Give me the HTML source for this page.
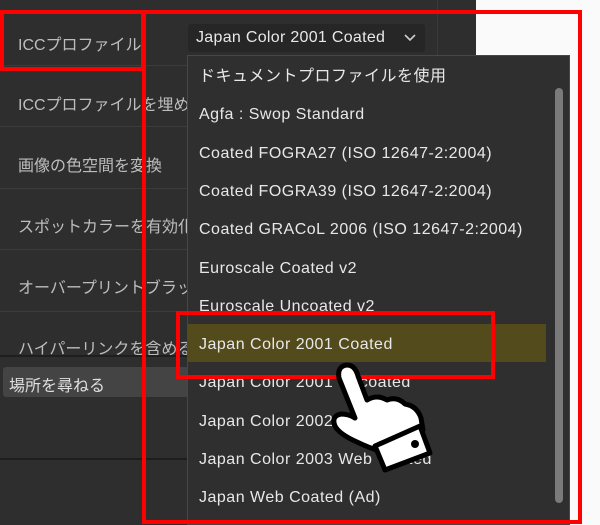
<!DOCTYPE html>
<html><head><meta charset="utf-8"><style>
*{margin:0;padding:0;box-sizing:border-box}
body{width:600px;height:525px;overflow:hidden;background:#fafafa;position:relative;font-family:"Liberation Sans","Noto Sans CJK JP",sans-serif}
.panel{position:absolute;left:0;top:0;width:476px;height:525px;background:#2e2e2e}
.lbl{position:absolute;left:18px;color:#bdbdbd;font-size:16px;white-space:nowrap}
.sep{position:absolute;left:0;height:1px;background:#3c3c3c}
.dd{position:absolute;left:187px;top:55px;width:383px;height:470px;background:#2f2f2f;border:1px solid #474747}
.it{position:absolute;left:11px;color:#e8e8e8;font-size:16px;white-space:nowrap;line-height:20px;letter-spacing:0.5px}
.r{position:absolute;border:4px solid #f00}
</style></head><body>
<div class="panel"></div>
<div style="position:absolute;left:437px;top:0;width:1px;height:55px;background:#3a3a3a"></div>
<div class="lbl" style="top:31px">ICCプロファイル</div>
<div class="sep" style="top:65px;width:187px"></div>
<div class="lbl" style="top:91px">ICCプロファイルを埋め込</div>
<div class="sep" style="top:126px;width:187px"></div>
<div class="lbl" style="top:152px">画像の色空間を変換</div>
<div class="sep" style="top:188px;width:187px"></div>
<div class="lbl" style="top:213px">スポットカラーを有効化</div>
<div class="sep" style="top:249px;width:187px"></div>
<div class="lbl" style="top:274px">オーバープリントブラック</div>
<div class="sep" style="top:311px;width:187px"></div>
<div class="lbl" style="top:335px">ハイパーリンクを含める</div>
<div class="sep" style="top:355px;width:187px;background:#1e1e1e;height:2px"></div>
<div style="position:absolute;left:3px;top:367px;width:186px;height:30px;background:#444;border-radius:3px;color:#e0e0e0;font-size:16px;padding:5px 0 0 6px">場所を尋ねる</div>
<div class="sep" style="top:458px;width:187px;background:#1e1e1e;height:2px"></div>
<div style="position:absolute;left:188px;top:24px;width:237px;height:28px;background:#262626;border-radius:3px;color:#e8e8e8;font-size:16px;padding:5px 0 0 8px;letter-spacing:0.3px">Japan Color 2001 Coated
<svg style="position:absolute;right:9px;top:10px" width="12" height="8" viewBox="0 0 12 8"><path d="M1 1 L6 6 L11 1" fill="none" stroke="#ccc" stroke-width="1.6"/></svg></div>
<div class="dd">
<div class="it" style="top:11px">ドキュメントプロファイルを使用</div>
<div class="it" style="top:49px">Agfa : Swop Standard</div>
<div class="it" style="top:88px">Coated FOGRA27 (ISO 12647-2:2004)</div>
<div class="it" style="top:126px">Coated FOGRA39 (ISO 12647-2:2004)</div>
<div class="it" style="top:164px">Coated GRACoL 2006 (ISO 12647-2:2004)</div>
<div class="it" style="top:203px">Euroscale Coated v2</div>
<div class="it" style="top:241px">Euroscale Uncoated v2</div>
<div style="position:absolute;left:0;top:268px;width:358px;height:38px;background:#534b1b"></div>
<div class="it" style="top:279px">Japan Color 2001 Coated</div>
<div class="it" style="top:317px">Japan Color 2001 Uncoated</div>
<div class="it" style="top:356px">Japan Color 2002 Newspaper</div>
<div class="it" style="top:394px">Japan Color 2003 Web Coated</div>
<div class="it" style="top:432px">Japan Web Coated (Ad)</div>
<div style="position:absolute;left:367px;top:32px;width:8px;height:415px;background:#7a7a7a;border-radius:4px"></div>
</div>
<div class="r" style="left:0;top:10px;width:145px;height:61px"></div>
<div class="r" style="left:142px;top:10px;width:440px;height:514px"></div>
<div class="r" style="left:176px;top:311px;width:319px;height:68px"></div>
<svg style="position:absolute;left:325px;top:360px" width="110" height="115" viewBox="0 0 110 115">
<path d="M14 18 Q12 6 22 5 Q30 5 33 16 L42 40 Q52 34 62 40 Q72 36 80 44 Q92 46 96 58 L98 70 L58 92 Q44 88 32 82 Q14 74 10 66 Q6 56 16 54 Q24 54 30 58 Z" fill="#fff" stroke="#000" stroke-width="5" stroke-linejoin="round"/>
<path d="M50 86 L95 66 L105 93 L60 110 Z" fill="#fff" stroke="#000" stroke-width="5" stroke-linejoin="round"/>
<circle cx="90" cy="84" r="4" fill="#000"/>
</svg>
</body></html>
